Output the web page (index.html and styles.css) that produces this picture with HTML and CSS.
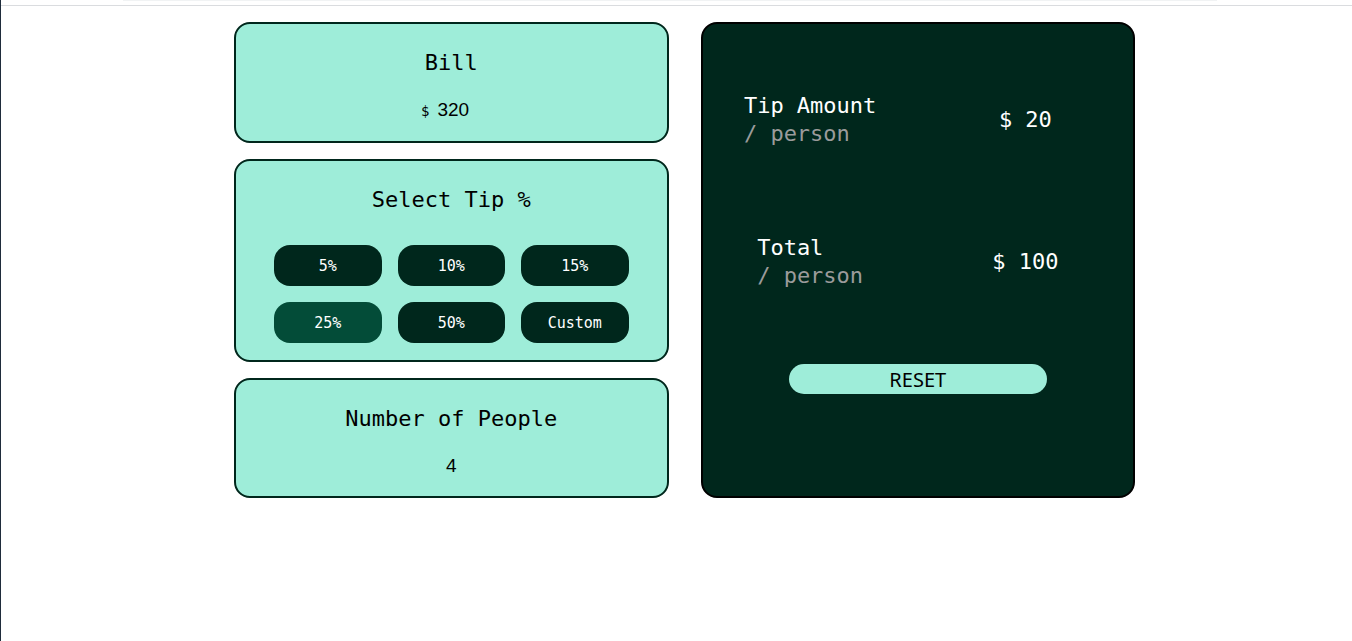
FILE: index.html
```html
<!DOCTYPE html>
<html lang="en">
<head>
<meta charset="utf-8">
<meta name="viewport" content="width=device-width, initial-scale=1">
<title>Tip Calculator</title>
<link rel="stylesheet" href="styles.css">
</head>
<body>
<header class="topbar"><div class="topbar-field"></div></header>
<main class="calculator">
  <form class="inputs">
    <section class="card">
      <h2 class="card-title"><label for="bill">Bill</label></h2>
      <div class="field">
        <span class="currency">$</span>
        <input class="value value-bill" id="bill" type="text" inputmode="decimal" value="320">
      </div>
    </section>
    <section class="card">
      <h2 class="card-title" id="tip-title">Select Tip %</h2>
      <div class="tips" role="group" aria-labelledby="tip-title">
        <button class="tip" type="button">5%</button>
        <button class="tip" type="button">10%</button>
        <button class="tip" type="button">15%</button>
        <button class="tip tip-active" type="button" aria-pressed="true">25%</button>
        <button class="tip" type="button">50%</button>
        <button class="tip" type="button">Custom</button>
      </div>
    </section>
    <section class="card">
      <h2 class="card-title"><label for="people">Number of People</label></h2>
      <div class="field">
        <input class="value value-people" id="people" type="text" inputmode="numeric" value="4">
      </div>
    </section>
  </form>
  <section class="results">
    <div class="result">
      <div class="result-label">Tip Amount<br><span class="per">/ person</span></div>
      <output class="result-amount">$ 20</output>
    </div>
    <div class="result">
      <div class="result-label">Total<br><span class="per">/ person</span></div>
      <output class="result-amount">$ 100</output>
    </div>
    <button class="reset" type="button">RESET</button>
  </section>
</main>
</body>
</html>
```
FILE: styles.css
```css
* {
  box-sizing: border-box;
}

body {
  min-height: 100vh;
  margin: 0;
  border-left: 1px solid #1f2c3b;
  background: #fff;
  color: #000;
  font-family: Consolas, "DejaVu Sans Mono", monospace;
  font-size: 22px;
  line-height: 28px;
}

.topbar {
  height: 6px;
  padding: 0 10% 0 9%;
  border-bottom: 1px solid #dadcdf;
}

.topbar-field {
  height: 1px;
  background: #f1f3f4;
}

.calculator {
  display: grid;
  grid-template-columns: 1fr 1fr;
  gap: 32px;
  max-width: 917px;
  margin: 0 auto;
  padding: 16px 0 16px 16px;
}

.inputs {
  display: flex;
  flex-direction: column;
  gap: 16px;
}

.card {
  padding: 25px 38px 16px;
  border: 2px solid #00271c;
  border-radius: 16px;
  background: #9eedd9;
  text-align: center;
}

.card-title {
  margin: 0;
  font-size: 22px;
  font-weight: 400;
}

.field {
  display: flex;
  align-items: baseline;
  justify-content: center;
  gap: 8px;
  padding-top: 19px;
}

.currency {
  font-size: 14px;
}

.value {
  height: 28px;
  padding: 0;
  border: 0;
  background: transparent;
  color: #000;
  font-family: "Liberation Sans", Arial, sans-serif;
  font-size: 19px;
}

.value-bill {
  width: 44px;
}

.value-people {
  width: 100%;
  text-align: center;
}

.tips {
  display: grid;
  grid-template-columns: repeat(3, 1fr);
  gap: 16px;
  padding: 31px 0 1px;
}

.tip {
  height: 41px;
  padding: 0;
  border: 0;
  border-radius: 16px;
  background: #00271c;
  color: #fff;
  font-family: inherit;
  font-size: 15px;
}

.tip-active {
  background: #034c38;
}

.results {
  padding-top: 25px;
  border: 2px solid #000;
  border-radius: 16px;
  background: #00271c;
  color: #fff;
}

.result {
  display: grid;
  grid-template-columns: 1fr 1fr;
  align-items: center;
  justify-items: center;
  padding: 43px 0;
}

.per {
  color: #9b9b9b;
}

.reset {
  display: block;
  width: 60%;
  height: 30px;
  margin: 31px auto 0;
  padding: 0;
  border: 0;
  border-radius: 16px;
  background: #9eedd9;
  color: #000;
  font-family: "Noto Sans", sans-serif;
  font-size: 20px;
}
```
